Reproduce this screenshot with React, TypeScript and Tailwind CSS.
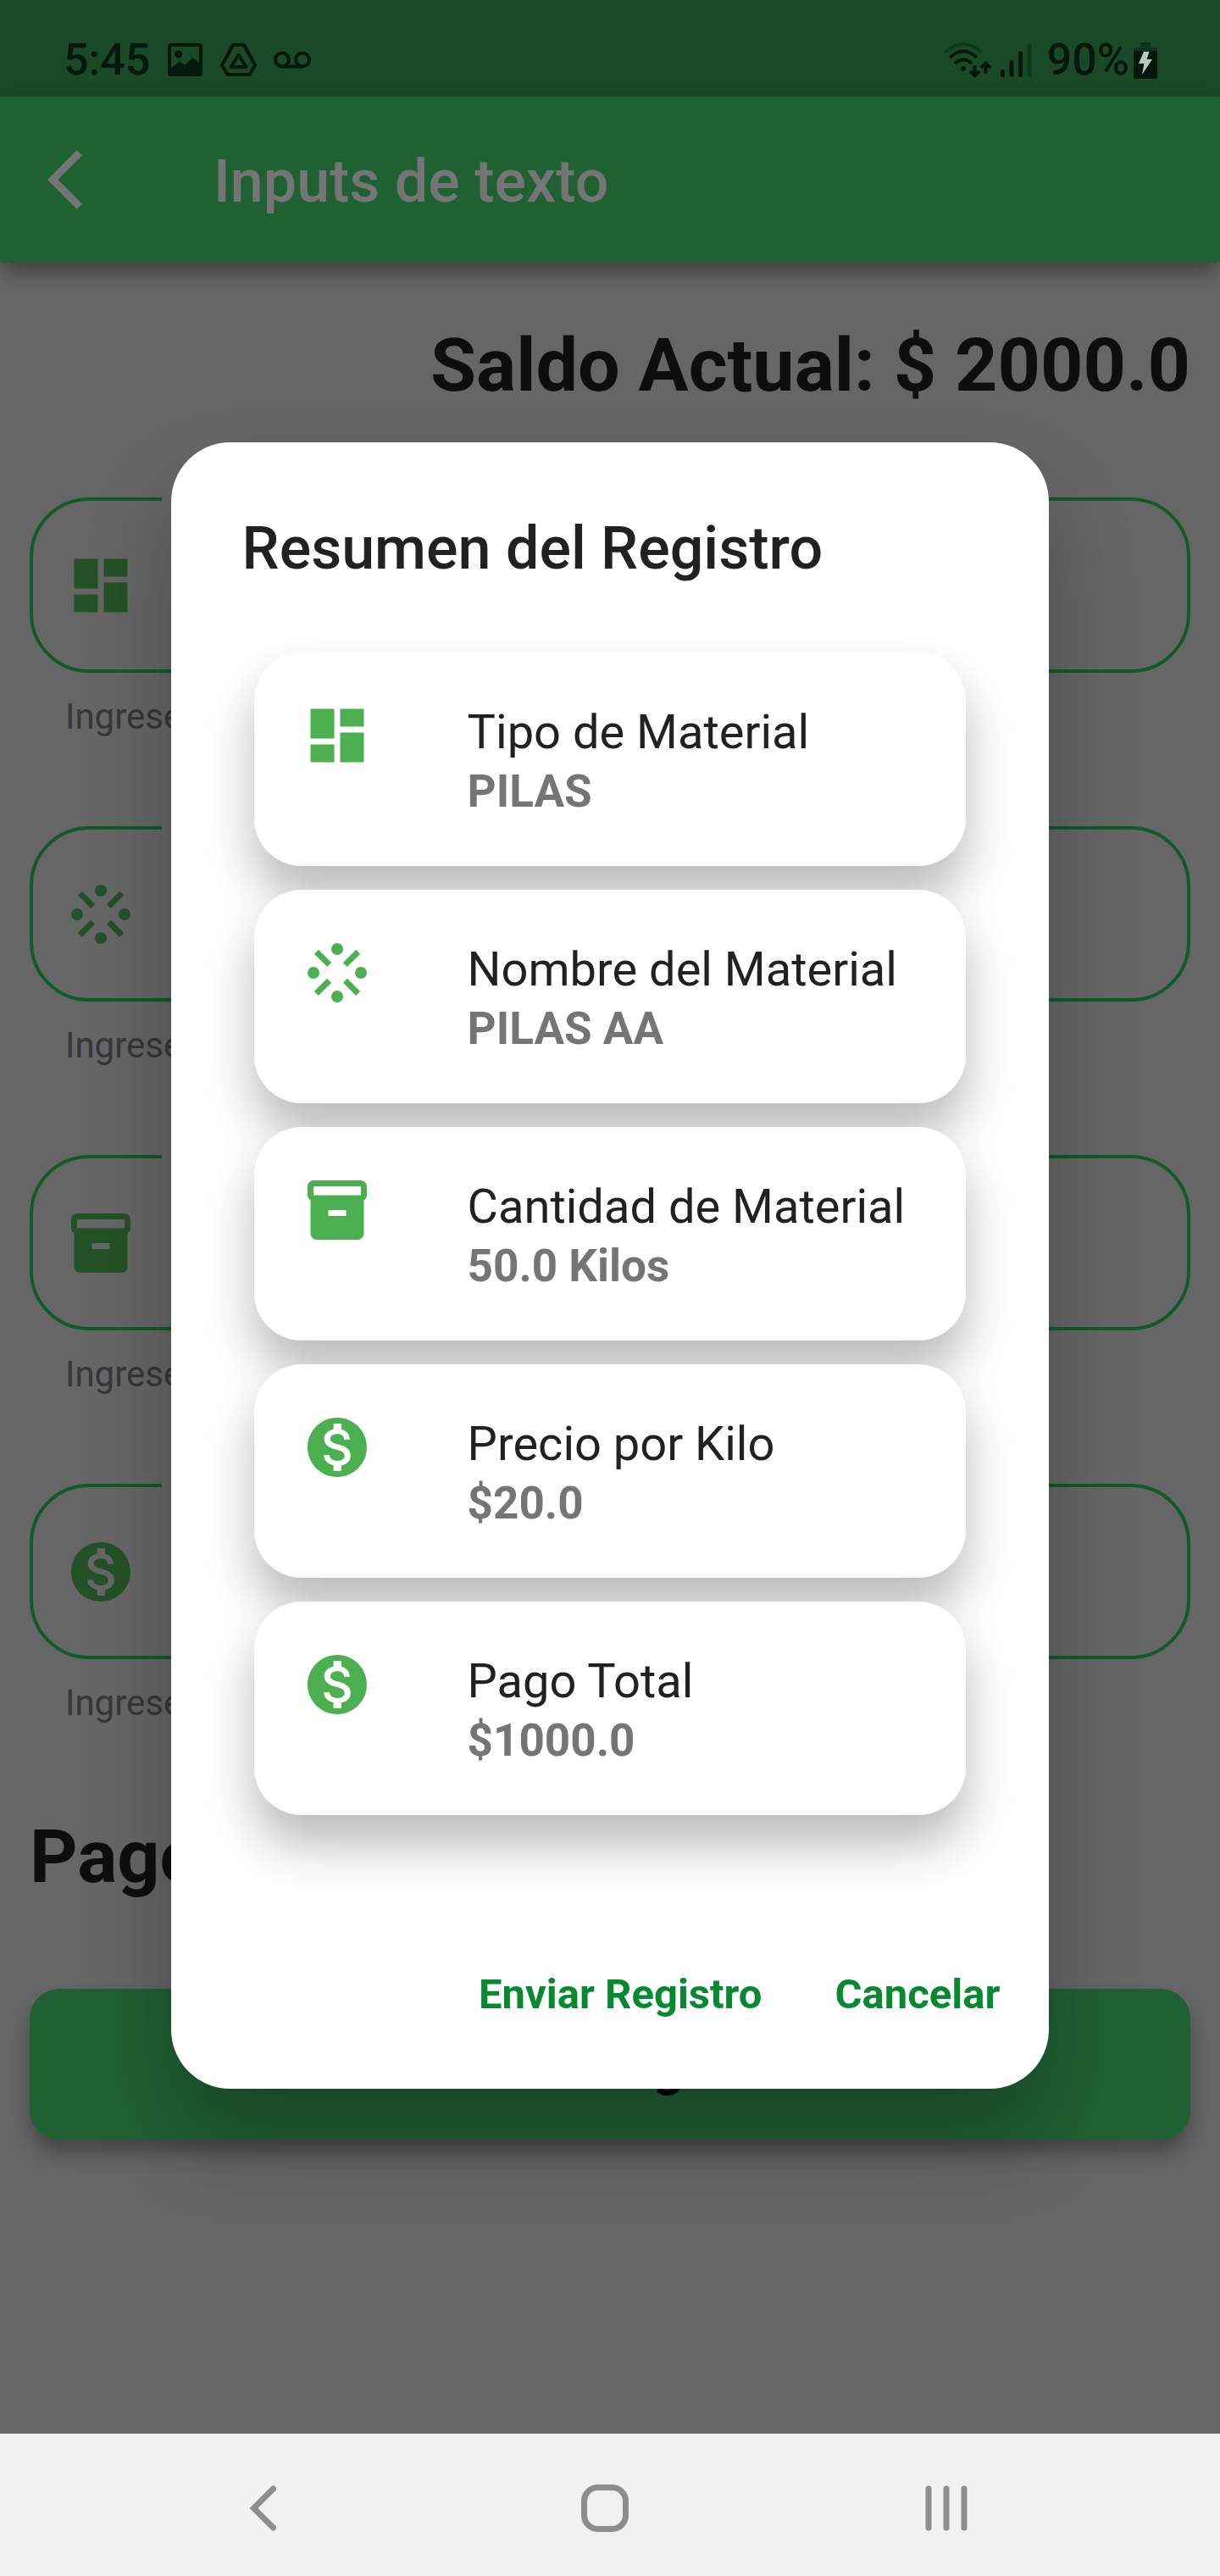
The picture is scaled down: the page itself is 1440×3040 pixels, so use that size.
import type { ComponentType, ReactNode } from "react";
import { MdDashboard, MdInventory2, MdMonetizationOn, MdStream } from "react-icons/md";

type Icon = ComponentType<{ className?: string }>;

const fields: { id: string; label: string; help: string; icon: Icon }[] = [
  { id: "tipo", label: "Tipo", help: "Ingrese el tipo", icon: MdDashboard },
  { id: "nombre", label: "Nombre", help: "Ingrese el nombre", icon: MdStream },
  { id: "cantidad", label: "Cantidad", help: "Ingrese la cantidad", icon: MdInventory2 },
  { id: "precio", label: "Precio", help: "Ingrese el precio", icon: MdMonetizationOn },
];

const summary: { title: string; value: string; icon: Icon }[] = [
  { title: "Tipo de Material", value: "PILAS", icon: MdDashboard },
  { title: "Nombre del Material", value: "PILAS AA", icon: MdStream },
  { title: "Cantidad de Material", value: "50.0 Kilos", icon: MdInventory2 },
  { title: "Precio por Kilo", value: "$20.0", icon: MdMonetizationOn },
  { title: "Pago Total", value: "$1000.0", icon: MdMonetizationOn },
];

function StatusBar() {
  return (
    <div className="flex h-[114px] items-center justify-between bg-[#194927] pt-[28px] pr-[73px] pl-[75px] text-[#04180c]">
      <div className="flex items-center">
        <span className="w-[123px] text-[52px] leading-[60px] font-medium">5:45</span>
        <svg className="h-[40px] w-[42px]" viewBox="0 0 42 40" fill="none">
          <rect x="2" y="2" width="37" height="35" rx="2" stroke="currentColor" strokeWidth="4" />
          <circle cx="12.500" cy="13" r="4.500" fill="currentColor" />
          <path d="M3 30 14 21.500 20 26 29.500 17 38 24V37H3Z" fill="currentColor" />
        </svg>
        <svg className="ml-[20px] h-[40px] w-[43px]" viewBox="0 0 43 40" fill="none" stroke="currentColor" strokeLinejoin="round" strokeWidth="4">
          <path d="M15 2H28L41 26 34.500 37H8.500L2 26Z" />
          <path d="M21.500 14 12.500 28H30.500Z" />
        </svg>
        <svg className="ml-[20px] h-[20px] w-[44px]" viewBox="0 0 44 20" fill="none" stroke="currentColor" strokeWidth="4">
          <circle cx="10" cy="9.500" r="8" />
          <circle cx="34" cy="9.500" r="8" />
          <path d="M10 17.500H34" />
        </svg>
      </div>
      <div className="flex items-center">
        <svg className="h-[44px] w-[58px]" viewBox="0 0 58 44" fill="none" stroke="currentColor" strokeWidth="4">
          <path d="M2 13Q24-7 46 13" opacity="0.35" />
          <path d="M8 19Q24 4 40 19" />
          <path d="M14 26Q24 17 34 26" />
          <circle cx="24" cy="32" r="3" fill="currentColor" stroke="none" />
          <path d="M37.500 28V40M32 35 37.500 40.500 43 35M50.500 38V26M45 31 50.500 25.500 56 31" />
        </svg>
        <svg className="ml-[10px] h-[40px] w-[37px]" viewBox="0 0 37 40" stroke="currentColor" strokeLinecap="round" strokeWidth="5">
          <path d="M2.500 33.500V37.500M13 23V37.500M23.500 12V37.500" />
          <path d="M34 3V37.500" opacity="0.35" />
        </svg>
        <span className="ml-[18px] text-[52px] leading-[60px] font-medium">90%</span>
        <svg className="ml-[5px] h-[43px] w-[29px]" viewBox="0 0 29 43">
          <path d="M8 0H20V6H28V12H0V6H8Z" fill="currentColor" opacity="0.45" />
          <rect y="10" width="28" height="33" rx="2" fill="currentColor" />
          <path d="M12 11H18.500L15.500 20H22L10 38 12.500 25H6Z" fill="#b9cabf" />
        </svg>
      </div>
    </div>
  );
}

function Field({ id, label, help, icon: IconGlyph }: (typeof fields)[number]) {
  return (
    <div>
      <div className="relative flex h-[207px] items-center rounded-[70px] border-4 border-[#115a29] pr-[66px] pl-[38px]">
        <label
          htmlFor={id}
          className="absolute -top-[20px] left-[152px] bg-[#666666] px-[14px] text-[42px] leading-[36px] text-[#0e0e0e]"
        >
          {label}
        </label>
        <IconGlyph className="size-[84px] text-[#245127]" />
        <input id={id} className="ml-[28px] h-[84px] min-w-0 flex-1 bg-transparent text-[56px] outline-none" />
      </div>
      <p className="mt-[28px] px-[42px] text-[42px] leading-[48px] text-[#373737]">{help}</p>
    </div>
  );
}

function SummaryCard({ title, value, icon: IconGlyph }: (typeof summary)[number]) {
  return (
    <li className="flex h-[252px] items-start rounded-[56px] bg-white px-[56px] pt-[56px] shadow-[0_35px_56px_rgba(0,0,0,0.27)]">
      <IconGlyph className="size-[84px] shrink-0 text-[#4caf50]" />
      <div className="ml-[112px] pt-[5px]">
        <h2 className="text-[56px] leading-[66px] text-[#212121]">{title}</h2>
        <p className="mt-[6px] text-[53px] leading-[62px] font-bold text-[#757575]">{value}</p>
      </div>
    </li>
  );
}

function ActionButton({ children }: { children: ReactNode }) {
  return (
    <button type="button" className="text-[49px] leading-[58px] font-bold text-[#078930]">
      {children}
    </button>
  );
}

export default function App() {
  return (
    <div className="flex min-h-screen flex-col bg-[#666666] font-['Roboto',sans-serif]">
      <StatusBar />

      <div className="relative flex flex-1 flex-col">
        <header className="flex h-[196px] items-center bg-[#206133] pl-[56px] text-[#757575] shadow-[0_12px_24px_-2px_rgba(0,0,0,0.4)]">
          <button type="button" aria-label="Atrás">
            <svg className="size-[84px]" viewBox="0 0 24 24" fill="currentColor">
              <path d="M11.670 3.870 9.900 2.100 0 12l9.900 9.900 1.770-1.770L3.540 12z" />
            </svg>
          </button>
          <h1 className="ml-[112px] pt-[3px] text-[70px] leading-[82px] font-medium">Inputs de texto</h1>
        </header>

        <main className="flex flex-col gap-[105px] px-[35px] pt-[69px] pb-[70px]">
          <p className="text-right text-[88px] leading-[103px] font-bold text-[#0e0e0e]">Saldo Actual: $ 2000.0</p>
          {fields.map((field) => (
            <Field key={field.id} {...field} />
          ))}
          <p className="text-[88px] leading-[103px] font-bold text-[#0e0e0e]">Pago Total: $ 1000.0</p>
          <button
            type="button"
            className="h-[178px] rounded-[35px] bg-[#206133] pt-[6px] text-[63px] font-bold text-black shadow-[0_16px_24px_-2px_rgba(0,0,0,0.35)]"
          >
            Enviar Registro
          </button>
        </main>

        <div className="absolute inset-0 flex items-center justify-center">
          <div
            role="dialog"
            aria-modal="true"
            aria-labelledby="dialog-title"
            className="w-[72%] rounded-[70px] bg-white pt-[84px] pb-[63px] shadow-[0_60px_100px_rgba(0,0,0,0.27)]"
          >
            <h1 id="dialog-title" className="px-[84px] text-[70px] leading-[82px] font-medium text-[#212121]">
              Resumen del Registro
            </h1>
            <ul className="mt-[82px] flex flex-col gap-[28px] px-[98px]">
              {summary.map((item) => (
                <SummaryCard key={item.title} {...item} />
              ))}
            </ul>
            <div className="mt-[183px] flex justify-end gap-[86px] pr-[58px] pb-[19px]">
              <ActionButton>Enviar Registro</ActionButton>
              <ActionButton>Cancelar</ActionButton>
            </div>
          </div>
        </div>
      </div>

      <nav className="grid h-[168px] grid-cols-3 place-items-center bg-[#f1f1f1] pt-[7px] pr-[121px] pl-[109px] text-[#8d8d8d]">
        <button type="button" aria-label="Volver">
          <svg className="size-[60px]" viewBox="0 0 60 60" fill="none" stroke="currentColor" strokeLinecap="round" strokeWidth="7">
            <path d="M41.500 7 18.500 30 41.500 53" />
          </svg>
        </button>
        <button type="button" aria-label="Inicio">
          <svg className="size-[60px]" viewBox="0 0 60 60" fill="none" stroke="currentColor" strokeWidth="7">
            <rect x="5.500" y="5.500" width="49" height="49" rx="16" />
          </svg>
        </button>
        <button type="button" aria-label="Recientes">
          <svg className="size-[60px]" viewBox="0 0 60 60" stroke="currentColor" strokeLinecap="round" strokeWidth="7">
            <path d="M9 7V53M30 7V53M51 7V53" />
          </svg>
        </button>
      </nav>
    </div>
  );
}
